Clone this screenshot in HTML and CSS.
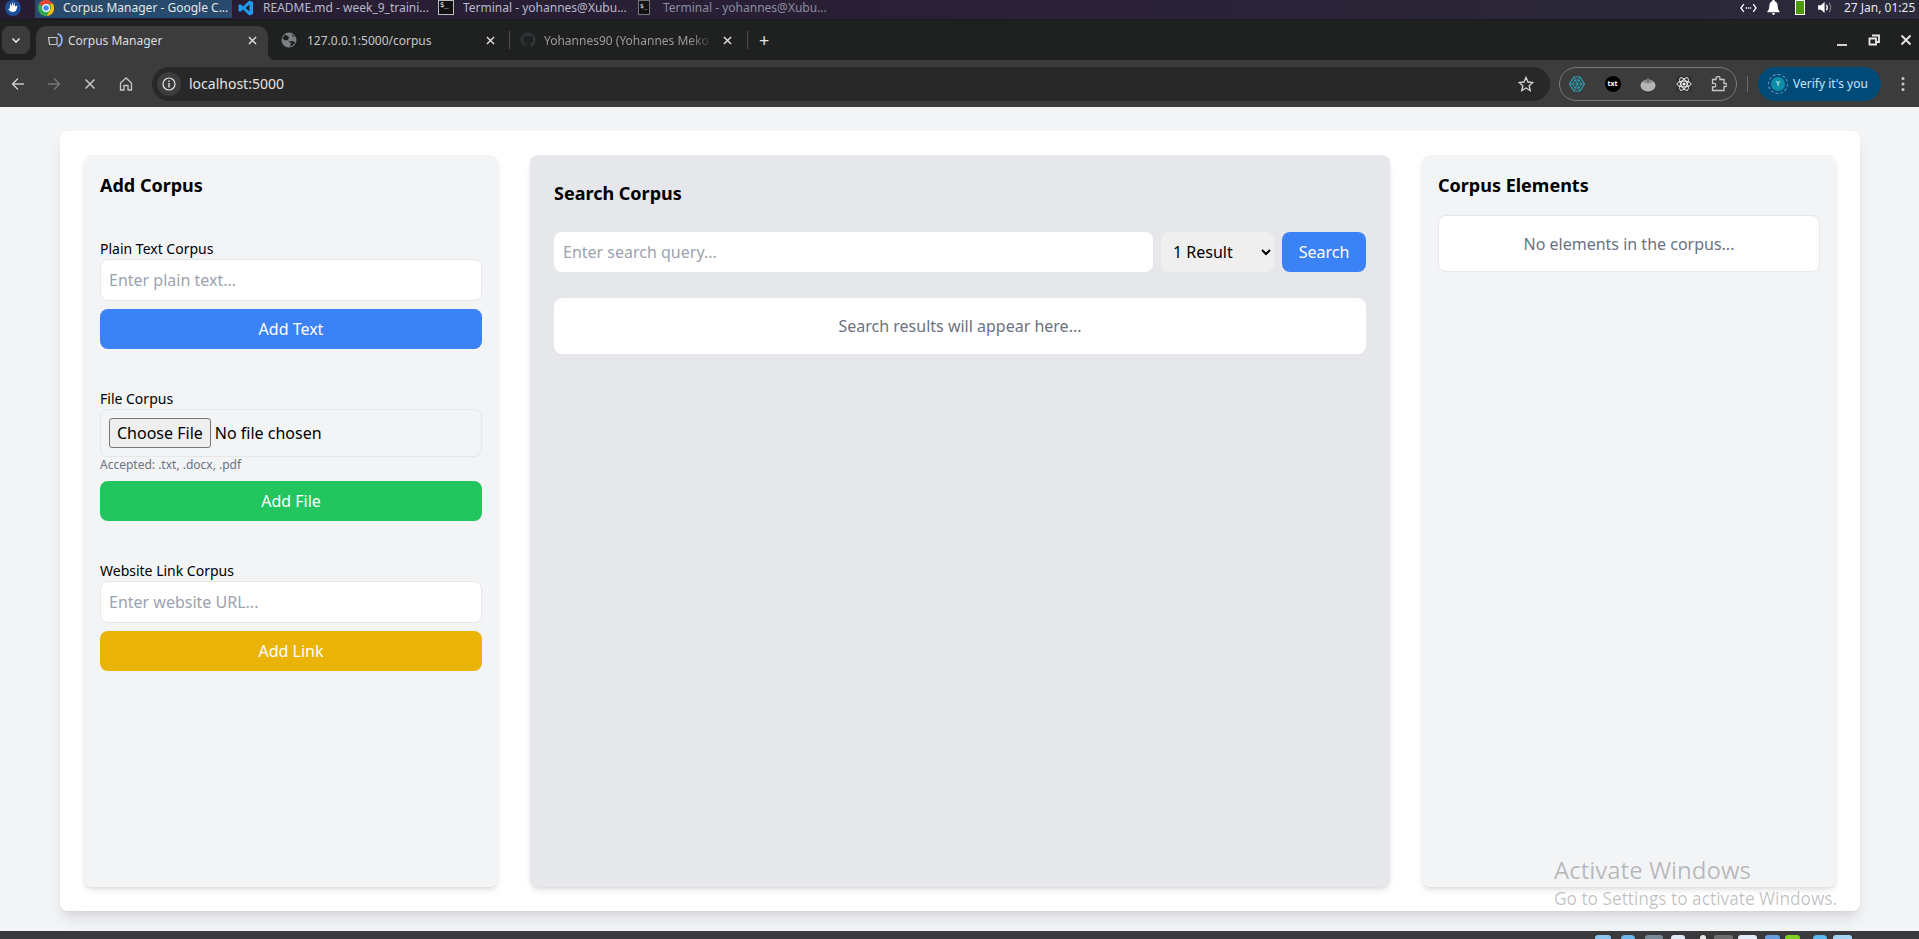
FILE: index.html
```html
<!DOCTYPE html>
<html lang="en">
<head>
    <meta charset="UTF-8">
    <title>Corpus Manager</title>
    <link rel="stylesheet" href="styles.css">
</head>
<body>
    <!-- desktop panel -->
    <div class="panel">
        <svg class="panel-logo" viewBox="0 0 16 16"><circle cx="8" cy="8" r="8" fill="#1d4f9c"/><path d="M3 9.500 4.500 8.500 5.500 3l1.200 3.500L7.500 1.500l1 4.500 1-4 .5 4.500 2.500-1-1.200 4.500c-1 2.500-5.500 3-7.800-.5z" fill="#fff"/></svg>
        <div class="task task-active">
            <svg class="task-icon" viewBox="0 0 16 16"><circle cx="8" cy="8" r="8" fill="#34a853"/><path d="M8 0a8 8 0 0 1 7 4H8a4 4 0 0 0-3.800 2.800L1.500 3.300A8 8 0 0 1 8 0z" fill="#ea4335"/><path d="M15 4a8 8 0 0 1-6 12l3-6a4 4 0 0 0-.5-6z" fill="#fbbc05"/><circle cx="8" cy="8" r="3.400" fill="#4285f4" stroke="#fff" stroke-width="1.200"/></svg>
            <span>Corpus Manager - Google C...</span>
        </div>
        <div class="task">
            <svg class="task-icon" viewBox="0 0 16 16"><path d="M11.500.5 15 2v12l-3.500 1.500L5 9.500 2 12 .5 11V5L2 4l3 2.500z" fill="#1f9cf0"/><path d="M11.500 4.500 7.500 8l4 3.500z" fill="#241f31"/></svg>
            <span>README.md - week_9_traini...</span>
        </div>
        <div class="task">
            <span class="term-icon">$_</span>
            <span>Terminal - yohannes@Xubu...</span>
        </div>
        <div class="task task-dim">
            <span class="term-icon">$_</span>
            <span>Terminal - yohannes@Xubu...</span>
        </div>
        <div class="tray">
            <svg class="tray-net" viewBox="0 0 18 10"><path d="M4 1 1 5l3 4M14 1l3 4-3 4" fill="none" stroke="#fff" stroke-width="1.400"/><path d="M6 5h6" stroke="#fff" stroke-width="1.400" stroke-dasharray="1.500 1"/></svg>
            <svg class="tray-bell" viewBox="0 0 14 16"><path d="M7 0c1 0 1.400.6 1.400 1.300C10.600 2 11.500 4 11.500 6.500c0 3 .8 4.500 2 5.500v1H.5v-1c1.200-1 2-2.500 2-5.500C2.500 4 3.400 2 5.600 1.300 5.600.6 6 0 7 0zM5.500 14h3c0 1-.6 2-1.500 2s-1.500-1-1.500-2z" fill="#fff"/></svg>
            <span class="tray-battery"></span>
            <svg class="tray-sound" viewBox="0 0 16 14"><path d="M0 4.500h3L7 1v12L3 9.500H0z" fill="#fff"/><path d="M9 4c1.200 1.800 1.200 4.200 0 6" fill="none" stroke="#fff" stroke-width="1.300"/><path d="M12 2c2 3 2 7 0 10" fill="none" stroke="#9a9aa2" stroke-width="1"/></svg>
            <span class="tray-clock">27 Jan, 01:25</span>
        </div>
    </div>

    <!-- browser tabs -->
    <div class="tabstrip">
        <div class="tab-menu">
            <svg class="ui-icon-sm" viewBox="0 0 10 10"><path d="M1.500 3.500 5 7l3.500-3.500" fill="none" stroke="#e3e3e3" stroke-width="1.600"/></svg>
        </div>
        <div class="tab tab-active">
            <svg class="favicon" viewBox="0 0 16 16"><path d="M1.500 5.500h8.500v7H2.500z" fill="none" stroke="#c4c7c5" stroke-width="1.200"/><path d="M10.500 1.500a7 7 0 0 1 0 13" fill="none" stroke="#8ab4f8" stroke-width="1.800"/></svg>
            <span class="tab-title">Corpus Manager</span>
            <svg class="tab-close" viewBox="0 0 10 10"><path d="M1 1l8 8M9 1 1 9" stroke="#e3e3e3" stroke-width="1.500"/></svg>
        </div>
        <div class="tab tab-second">
            <svg class="favicon" viewBox="0 0 16 16"><circle cx="8" cy="8" r="7.500" fill="#7d8083"/><path d="M4 2.500 8 5l-1 3-3 .5-2.500-2zM9 15l1-4-3-1.500 5-.5 2.500 2zM11 2l.5 2.500 2.500.5" fill="#1f2120"/></svg>
            <span class="tab-title">127.0.0.1:5000/corpus</span>
            <svg class="tab-close" viewBox="0 0 10 10"><path d="M1 1l8 8M9 1 1 9" stroke="#e3e3e3" stroke-width="1.500"/></svg>
        </div>
        <span class="tab-sep"></span>
        <div class="tab tab-third">
            <svg class="favicon" viewBox="0 0 16 16"><path d="M8 .5a7.500 7.500 0 0 0-2.400 14.600c.4.100.5-.2.500-.4v-1.300c-2.100.5-2.500-1-2.500-1-.4-.9-.9-1.200-.9-1.200-.7-.5.100-.5.100-.5.800.100 1.200.8 1.200.8.700 1.200 1.800.9 2.300.7 0-.5.300-.9.500-1.100-1.700-.2-3.400-.8-3.400-3.700 0-.8.300-1.500.8-2-.1-.2-.3-1 .1-2 0 0 .6-.2 2.100.8a7 7 0 0 1 3.800 0c1.500-1 2.100-.8 2.100-.8.400 1 .2 1.800.1 2 .5.500.8 1.200.8 2 0 2.900-1.800 3.500-3.400 3.700.3.200.5.700.5 1.400v2.100c0 .2.100.5.500.4A7.500 7.500 0 0 0 8 .5z" fill="#2f3538"/></svg>
            <span class="tab-title tab-title-fade">Yohannes90 (Yohannes Meko</span>
            <svg class="tab-close" viewBox="0 0 10 10"><path d="M1 1l8 8M9 1 1 9" stroke="#e3e3e3" stroke-width="1.500"/></svg>
        </div>
        <span class="tab-sep"></span>
        <span class="tab-new">+</span>
        <div class="window-btns">
            <svg class="ui-icon" viewBox="0 0 12 12"><path d="M1 11h10" stroke="#e8e8e8" stroke-width="1.800"/></svg>
            <svg class="ui-icon" viewBox="0 0 12 12"><path d="M4 1.500h7v6.500H8.500M1.500 4.500h6.500v6H1.500z" fill="none" stroke="#e8e8e8" stroke-width="1.800"/></svg>
            <svg class="ui-icon" viewBox="0 0 12 12"><path d="M1.500 1.500l9 9M10.500 1.500l-9 9" stroke="#e8e8e8" stroke-width="1.800"/></svg>
        </div>
    </div>

    <!-- browser toolbar -->
    <div class="toolbar">
        <div class="nav-btns">
            <svg class="nav-icon" viewBox="0 0 14 14"><path d="M13 7H2M7 1.500 1.500 7 7 12.500" fill="none" stroke="#c7c7c7" stroke-width="1.500"/></svg>
            <svg class="nav-icon" viewBox="0 0 14 14"><path d="M1 7h11M7 1.500 12.500 7 7 12.500" fill="none" stroke="#757575" stroke-width="1.500"/></svg>
            <svg class="nav-icon" viewBox="0 0 14 14"><path d="M2.500 2.500l9 9M11.500 2.500l-9 9" stroke="#c7c7c7" stroke-width="1.500"/></svg>
            <svg class="nav-icon" viewBox="0 0 14 14"><path d="M7 1 1.500 6v7h3.500V8.500h4V13h3.500V6z" fill="none" stroke="#c7c7c7" stroke-width="1.300"/></svg>
        </div>
        <div class="omnibox">
            <span class="site-info">
                <svg class="ui-icon-info" viewBox="0 0 14 14"><circle cx="7" cy="7" r="6" fill="none" stroke="#e3e3e3" stroke-width="1.200"/><path d="M7 6v4.500" stroke="#e3e3e3" stroke-width="1.400"/><path d="M7 3.500v1.400" stroke="#e3e3e3" stroke-width="1.400"/></svg>
            </span>
            <span class="omni-url">localhost:5000</span>
            <svg class="omni-star" viewBox="0 0 16 16"><path d="M8 1.500l2 4.500 4.800.5-3.600 3.200 1 4.800L8 12l-4.200 2.500 1-4.800L1.200 6.500 6 6z" fill="none" stroke="#d0d0d0" stroke-width="1.400"/></svg>
        </div>
        <div class="extensions">
            <svg class="ext-icon" viewBox="0 0 16 16"><path d="M5 1h6l4.500 7-4.500 7H5L.5 8z" fill="none" stroke="#2aa3b8" stroke-width="1.200"/><path d="M6 4h4l2.500 4L10 12H6L3.500 8z" fill="none" stroke="#2aa3b8"/><path d="M1 8h14M5 1l6 14M11 1 5 15" stroke="#2aa3b8" stroke-width=".8"/></svg>
            <span class="ext-txt">txt</span>
            <svg class="ext-icon" viewBox="0 0 16 16"><ellipse cx="8" cy="9.500" rx="7.500" ry="6" fill="#b4b4b4"/><path d="M3 6c2 1.500 8 1.500 10 0-1-2-3-2.500-5-2.500S4 4 3 6z" fill="#8a8a8a"/><path d="M8 7V1.500" stroke="#666" stroke-width="1.200"/></svg>
            <span class="ext-atom">
                <svg class="ext-icon" viewBox="0 0 16 16"><g fill="none" stroke="#f2f2f2" stroke-width="1"><ellipse cx="8" cy="8" rx="7" ry="3"/><ellipse cx="8" cy="8" rx="7" ry="3" transform="rotate(60 8 8)"/><ellipse cx="8" cy="8" rx="7" ry="3" transform="rotate(120 8 8)"/></g><circle cx="8" cy="8" r="1.500" fill="#f2f2f2"/></svg>
            </span>
            <svg class="ext-icon" viewBox="0 0 16 16"><path d="M1.500 3.500H5V2.500a2 2 0 0 1 4 0v1h4v4h1.500a1.500 1.500 0 0 1 0 3H13v4H1.500v-3.500H3a1.800 1.800 0 0 0 0-3.600H1.500z" fill="none" stroke="#c7c7c7" stroke-width="1.300"/></svg>
        </div>
        <span class="toolbar-sep"></span>
        <div class="verify">
            <span class="verify-avatar"><span class="verify-letter">Y</span></span>
            <span>Verify it's you</span>
        </div>
        <svg class="kebab" viewBox="0 0 4 16"><circle cx="2" cy="2.500" r="1.500" fill="#c7c7c7"/><circle cx="2" cy="8" r="1.500" fill="#c7c7c7"/><circle cx="2" cy="13.500" r="1.500" fill="#c7c7c7"/></svg>
    </div>

    <main class="page">
        <div class="card">
            <section class="col col-add">
                <h2 class="col-title title-add">Add Corpus</h2>

                <div class="add-group">
                    <label class="field-label" for="plain-text">Plain Text Corpus</label>
                    <input class="text-input" id="plain-text" type="text" placeholder="Enter plain text...">
                    <button class="btn btn-blue">Add Text</button>
                </div>

                <div class="add-group">
                    <label class="field-label" for="file-corpus">File Corpus</label>
                    <input class="file-input" id="file-corpus" type="file">
                    <p class="hint">Accepted: .txt, .docx, .pdf</p>
                    <button class="btn btn-green">Add File</button>
                </div>

                <div class="add-group">
                    <label class="field-label" for="link-corpus">Website Link Corpus</label>
                    <input class="text-input" id="link-corpus" type="text" placeholder="Enter website URL...">
                    <button class="btn btn-yellow">Add Link</button>
                </div>
            </section>

            <section class="col col-search">
                <h2 class="col-title title-search">Search Corpus</h2>
                <div class="search-row">
                    <input class="search-input" type="text" placeholder="Enter search query...">
                    <select class="search-select">
                        <option>1 Result</option>
                        <option>3 Results</option>
                        <option>5 Results</option>
                    </select>
                    <button class="btn btn-blue btn-search">Search</button>
                </div>
                <div class="results">Search results will appear here...</div>
            </section>

            <section class="col col-elements">
                <h2 class="col-title title-elements">Corpus Elements</h2>
                <div class="elements">No elements in the corpus...</div>
            </section>
        </div>
    </main>

    <!-- bottom dock, only the tips of its icons are in view -->
    <div class="dock">
        <span class="dock-tip tip-a"></span>
        <span class="dock-tip tip-b"></span>
        <span class="dock-tip tip-c"></span>
        <span class="dock-tip tip-d"></span>
        <span class="dock-tip tip-e"></span>
        <span class="dock-tip tip-f"></span>
        <span class="dock-tip tip-g"></span>
        <span class="dock-tip tip-h"></span>
        <span class="dock-tip tip-i"></span>
        <span class="dock-tip tip-j"></span>
        <span class="dock-tip tip-k"></span>
    </div>

    <div class="watermark">
        <div class="watermark-title">Activate Windows</div>
        <div class="watermark-sub">Go to Settings to activate Windows.</div>
    </div>
</body>
</html>
```

FILE: styles.css
```css
* {
    box-sizing: border-box;
}

body {
    margin: 0;
    width: 1919px;
    height: 939px;
    overflow: hidden;
    display: flex;
    flex-direction: column;
    background-color: #f3f4f6;
    font-family: "Noto Sans", sans-serif;
    color: #000;
}

/* Desktop panel */
.panel {
    height: 19px;
    flex: none;
    display: flex;
    align-items: flex-start;
    background: linear-gradient(90deg, #261d33 0%, #2a2136 60%, #2b2a3b 100%);
    font-size: 12px;
    color: #d3d3dc;
}

.panel-logo {
    width: 16px;
    height: 16px;
    margin: 0 14px 0 5px;
}

.task {
    width: 197px;
    height: 18px;
    margin-right: 3px;
    padding: 0 0 3px 3px;
    display: flex;
    align-items: center;
    gap: 9px;
    white-space: nowrap;
    color: #b9b9c9;
}

.task-active {
    background-color: #274a6d;
    color: #e6e6e6;
}

.task-dim {
    color: #8c8ca0;
}

.task-dim .term-icon {
    width: 12px;
    margin-right: 4px;
    border-color: #777;
    font-size: 6px;
}

.task-icon {
    width: 16px;
    height: 16px;
    flex: none;
}

.term-icon {
    width: 16px;
    height: 15px;
    flex: none;
    border: 1px solid #bbb;
    background-color: #111;
    color: #fff;
    font-size: 7px;
    line-height: 9px;
    padding-left: 1px;
    font-family: "DejaVu Sans Mono", monospace;
}

.tray {
    margin-left: auto;
    height: 18px;
    padding-bottom: 3px;
    display: flex;
    align-items: center;
    color: #e6e6ee;
}

.tray-net {
    width: 17px;
    height: 10px;
    margin-right: 10px;
}

.tray-bell {
    width: 13px;
    height: 15px;
    margin-right: 15px;
}

.tray-battery {
    width: 10px;
    height: 15px;
    margin-right: 13px;
    border: 1px solid #fff;
    background-color: #4e9a06;
}

.tray-sound {
    width: 15px;
    height: 13px;
    margin-right: 11px;
}

.tray-clock {
    width: 75px;
    white-space: nowrap;
}

/* Tab strip */
.tabstrip {
    height: 41px;
    flex: none;
    display: flex;
    align-items: flex-end;
    background-color: #1f2120;
    border-top: 1px solid #1a1a1e;
    font-size: 12px;
    color: #c7c7c7;
    padding-left: 2px;
}

.tab-menu {
    width: 28px;
    height: 28px;
    margin: 0 6px 6px 0;
    background-color: #3c3c3c;
    border-radius: 8px;
    display: flex;
    align-items: center;
    justify-content: center;
}

.ui-icon-sm {
    width: 10px;
    height: 10px;
}

.tab {
    position: relative;
    height: 34px;
    padding-bottom: 6px;
    border-radius: 10px 10px 0 0;
    display: flex;
    align-items: center;
    white-space: nowrap;
}

.tab-active {
    width: 232px;
    padding-left: 11px;
    padding-right: 11px;
    gap: 5px;
    background-color: #3c3c3c;
    color: #dcdcdc;
}

/* small flares at the foot of the active tab */
.tab-active::before,
.tab-active::after {
    content: "";
    position: absolute;
    bottom: 0;
    width: 8px;
    height: 8px;
}

.tab-active::before {
    left: -8px;
    background: radial-gradient(circle at 0 0, #1f2120 8px, #3c3c3c 8.5px);
}

.tab-active::after {
    right: -8px;
    background: radial-gradient(circle at 100% 0, #1f2120 8px, #3c3c3c 8.5px);
}

.tab-second {
    width: 241px;
    padding-left: 13px;
    padding-right: 14px;
    gap: 10px;
}

.tab-third {
    width: 237px;
    padding-left: 10px;
    padding-right: 15px;
    gap: 8px;
}

.tab-title {
    flex: 1;
    min-width: 0;
    overflow: hidden;
}

.tab-title-fade {
    color: #9a9a9a;
    -webkit-mask-image: linear-gradient(90deg, #000 85%, transparent 100%);
    mask-image: linear-gradient(90deg, #000 85%, transparent 100%);
}

.tab-close {
    width: 9px;
    height: 9px;
    flex: none;
}

.tab-sep {
    width: 1px;
    height: 18px;
    margin-bottom: 11px;
    background-color: #4d4d4d;
}

.favicon {
    width: 16px;
    height: 16px;
    flex: none;
}

.tab-new {
    font-size: 18px;
    line-height: 28px;
    height: 34px;
    margin-left: 11px;
    color: #e3e3e3;
}

.window-btns {
    margin-left: auto;
    height: 41px;
    display: flex;
    align-items: center;
    gap: 20px;
    padding-right: 7px;
}

.ui-icon {
    width: 12px;
    height: 12px;
}

/* Toolbar */
.toolbar {
    height: 47px;
    flex: none;
    display: flex;
    align-items: center;
    background-color: #3c3c3c;
}

.nav-btns {
    display: flex;
    width: 152px;
    padding-left: 11px;
    gap: 22px;
}

.nav-icon {
    width: 14px;
    height: 14px;
}

.omnibox {
    width: 1398px;
    height: 34px;
    display: flex;
    align-items: center;
    background-color: #282828;
    border-radius: 17px;
    padding: 0 16px 0 5px;
    font-size: 14px;
    color: #e3e3e3;
}

.site-info {
    width: 24px;
    height: 24px;
    border-radius: 12px;
    background-color: #3c3c3c;
    display: flex;
    align-items: center;
    justify-content: center;
    margin-right: 8px;
}

.ui-icon-info {
    width: 14px;
    height: 14px;
}

.omni-url {
    flex: 1;
}

.omni-star {
    width: 16px;
    height: 16px;
}

.extensions {
    width: 178px;
    height: 34px;
    margin-left: 9px;
    padding: 0 9px;
    border: 1px solid #7a7a7a;
    border-radius: 17px;
    display: flex;
    align-items: center;
    justify-content: space-between;
}

.ext-icon {
    width: 16px;
    height: 16px;
    display: block;
}

.ext-txt {
    width: 16px;
    height: 16px;
    border-radius: 8px;
    background-color: #000;
    color: #fff;
    font-size: 7px;
    font-weight: 700;
    line-height: 16px;
    text-align: center;
}

.ext-atom {
    background-color: #333;
}

.toolbar-sep {
    width: 1px;
    height: 16px;
    margin: 0 10px;
    background-color: #6a6a6a;
}

.verify {
    width: 123px;
    height: 34px;
    border-radius: 17px;
    background-color: #004a77;
    color: #c2e7ff;
    font-size: 12px;
    white-space: nowrap;
    display: flex;
    align-items: center;
    gap: 5px;
    padding-left: 10px;
}

.verify-avatar {
    width: 20px;
    height: 20px;
    border: 1px dashed #7fb0c9;
    border-radius: 50%;
    padding: 2px;
    display: flex;
}

.verify-letter {
    flex: 1;
    border-radius: 50%;
    background-color: #0e8fa8;
    color: #fff;
    font-size: 7px;
    line-height: 14px;
    text-align: center;
}

.kebab {
    width: 4px;
    height: 16px;
    margin-left: 20px;
}

/* Page */
.page {
    flex: 1;
    min-height: 0;
    padding: 24px 59px 20px 60px;
    display: flex;
}

.card {
    flex: 1;
    padding: 24px;
    background-color: #fff;
    border-radius: 8px;
    box-shadow: 0 10px 15px -3px rgba(0, 0, 0, 0.1), 0 4px 6px -4px rgba(0, 0, 0, 0.1);
    display: grid;
    grid-template-columns: repeat(4, 1fr);
    gap: 32px;
}

.col {
    background-color: #f3f4f6;
    border-radius: 8px;
    padding: 16px;
    box-shadow: 0 4px 6px -1px rgba(0, 0, 0, 0.1), 0 2px 4px -2px rgba(0, 0, 0, 0.1);
}

.col-search {
    grid-column: span 2;
    background-color: #e5e7eb;
    padding: 24px;
}

.col-title {
    margin: 0;
    font-size: 18px;
    font-weight: 700;
    line-height: 28px;
}

.title-add {
    margin-bottom: 40px;
}

.title-search {
    margin-bottom: 25px;
}

.title-elements {
    margin-bottom: 16px;
}

.add-group {
    margin-bottom: 40px;
}

.field-label {
    display: block;
    font-size: 14px;
    line-height: 20px;
}

.text-input {
    display: block;
    width: 100%;
    height: 42px;
    margin-bottom: 8px;
    padding: 0 8px;
    border: 1px solid #e5e7eb;
    border-radius: 8px;
    background-color: #fff;
    font-family: inherit;
    font-size: 16px;
}

.text-input::placeholder,
.search-input::placeholder {
    color: #9ca3af;
}

.file-input {
    display: block;
    width: 100%;
    height: 48px;
    padding: 8px;
    border: 1px solid #e5e7eb;
    border-radius: 8px;
    font-family: inherit;
    font-size: 16px;
}

.file-input::file-selector-button {
    height: 30px;
    margin-right: 4px;
    padding: 0 7px;
    border: 1px solid #767676;
    border-radius: 3px;
    background-color: #efefef;
    font-family: inherit;
    font-size: 16px;
}

.hint {
    margin: 0 0 8px;
    font-size: 12px;
    line-height: 16px;
    color: #6b7280;
}

.btn {
    display: block;
    width: 100%;
    height: 40px;
    border: none;
    border-radius: 8px;
    color: #fff;
    font-family: inherit;
    font-size: 16px;
}

.btn-blue {
    background-color: #3b82f6;
}

.btn-green {
    background-color: #22c55e;
}

.btn-yellow {
    background-color: #eab308;
}

.search-row {
    display: flex;
    gap: 8px;
    margin-bottom: 26px;
}

.search-input {
    flex: 1;
    min-width: 0;
    height: 40px;
    padding: 0 9px;
    border: none;
    border-radius: 8px;
    background-color: #fff;
    font-family: inherit;
    font-size: 16px;
}

.search-select {
    width: 113px;
    height: 40px;
    padding: 0 8px;
    border: none;
    border-radius: 8px;
    background-color: #efefef;
    font-family: inherit;
    font-size: 16px;
}

.btn-search {
    width: 84px;
}

.results {
    height: 56px;
    padding: 16px;
    border-radius: 8px;
    background-color: #fff;
    color: #6b7280;
    font-size: 16px;
    line-height: 24px;
    text-align: center;
}

.elements {
    height: 57px;
    padding: 16px;
    border: 1px solid #e5e7eb;
    border-radius: 8px;
    background-color: #fff;
    color: #6b7280;
    font-size: 16px;
    line-height: 24px;
    text-align: center;
}

/* Dock */
.dock {
    height: 8px;
    flex: none;
    background-color: #3a3a3c;
    display: flex;
    align-items: flex-end;
    padding-left: 1595px;
}

.dock-tip {
    height: 4px;
    border-radius: 3px 3px 0 0;
}

.tip-a { width: 16px; margin-right: 10px; background-color: #8fc6f0; }
.tip-b { width: 14px; margin-right: 10px; background-color: #6fb8ee; border-radius: 7px 7px 0 0; }
.tip-c { width: 18px; margin-right: 8px; background-color: #7a8a99; }
.tip-d { width: 14px; margin-right: 15px; background-color: #dfe8f5; }
.tip-e { width: 6px; margin-right: 8px; background-color: #e8e8e8; }
.tip-f { width: 19px; margin-right: 5px; background-color: #6e6e6e; }
.tip-g { width: 19px; margin-right: 8px; background-color: #e2ebf7; }
.tip-h { width: 15px; margin-right: 5px; background-color: #6a9ce0; }
.tip-i { width: 15px; margin-right: 13px; background-color: #7ed321; }
.tip-j { width: 14px; margin-right: 6px; background-color: #5cb8f0; border-radius: 7px 7px 0 0; }
.tip-k { width: 19px; background-color: #a5d4f5; }

/* Windows activation watermark */
.watermark {
    position: absolute;
    left: 1554px;
    top: 853px;
    color: rgba(0, 0, 0, 0.25);
    font-family: "Open Sans", sans-serif;
    white-space: nowrap;
}

.watermark-title {
    font-size: 24px;
    line-height: 34px;
}

.watermark-sub {
    font-size: 17.3px;
    line-height: 24px;
}
```
